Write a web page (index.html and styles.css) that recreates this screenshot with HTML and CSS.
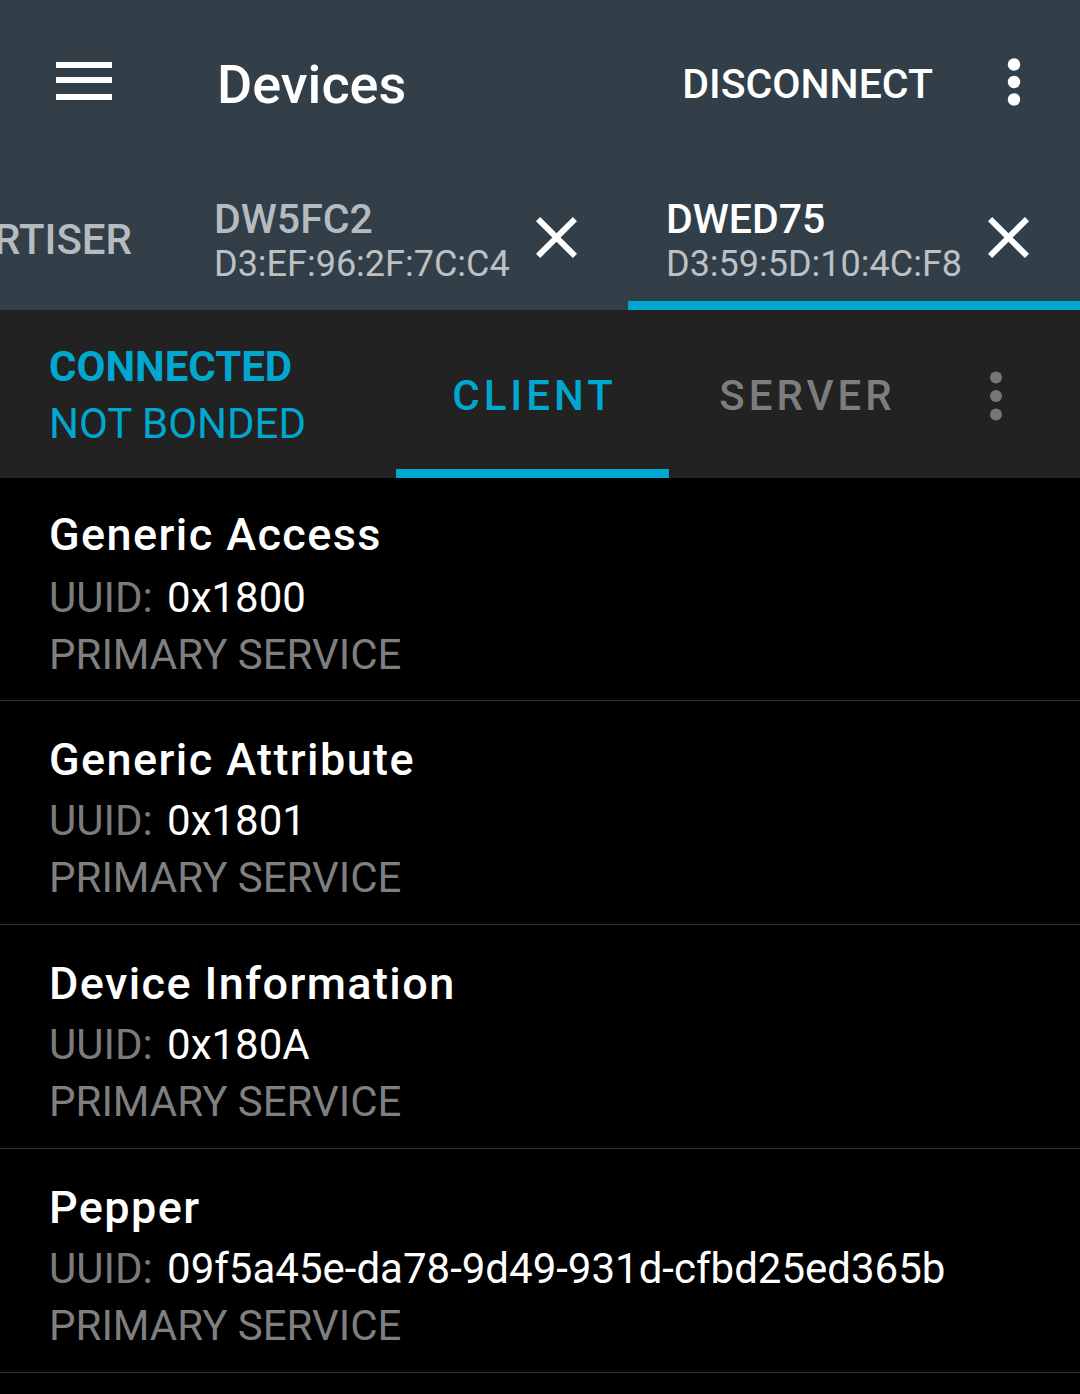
FILE: index.html
```html
<!DOCTYPE html>
<html>
<head>
<meta charset="utf-8">
<link rel="stylesheet" href="styles.css">
</head>
<body>
<div class="app">
  <header class="appbar">
    <div class="toolbar">
      <svg class="menu-icon" width="56" height="38" viewBox="0 0 56 38"><rect x="0" y="0" width="56" height="6" fill="#fff"/><rect x="0" y="15" width="56" height="6" fill="#fff"/><rect x="0" y="32" width="56" height="6" fill="#fff"/></svg>
      <div class="title">Devices</div>
      <div class="spacer"></div>
      <div class="action">DISCONNECT</div>
      <svg class="overflow" width="14" height="48" viewBox="0 0 14 48"><circle cx="7" cy="6.5" r="6.2" fill="#fff"/><circle cx="7" cy="24" r="6.2" fill="#fff"/><circle cx="7" cy="41.5" r="6.2" fill="#fff"/></svg>
    </div>
    <div class="device-tabs">
      <div class="dtab dtab-partial"><span class="dtab-single">ADVERTISER</span></div>
      <div class="dtab">
        <div class="dtab-text">
          <div class="dtab-name">DW5FC2</div>
          <div class="dtab-mac">D3:EF:96:2F:7C:C4</div>
        </div>
        <svg class="close" width="41" height="41" viewBox="5 5 14 14"><path fill="#fff" d="M19 6.41L17.59 5 12 10.59 6.41 5 5 6.41 10.59 12 5 17.59 6.41 19 12 13.41 17.59 19 19 17.59 13.41 12z"/></svg>
      </div>
      <div class="dtab dtab-active">
        <div class="dtab-text">
          <div class="dtab-name">DWED75</div>
          <div class="dtab-mac">D3:59:5D:10:4C:F8</div>
        </div>
        <svg class="close" width="41" height="41" viewBox="5 5 14 14"><path fill="#fff" d="M19 6.41L17.59 5 12 10.59 6.41 5 5 6.41 10.59 12 5 17.59 6.41 19 12 13.41 17.59 19 19 17.59 13.41 12z"/></svg>
      </div>
    </div>
  </header>
  <div class="statusbar">
    <div class="conn">
      <div class="conn-state">CONNECTED</div>
      <div class="conn-bond">NOT BONDED</div>
    </div>
    <div class="mtab mtab-active"><span>CLIENT</span></div>
    <div class="mtab"><span>SERVER</span></div>
    <svg class="overflow2" width="14" height="50" viewBox="0 0 14 50"><circle cx="7" cy="6.5" r="6" fill="#777"/><circle cx="7" cy="25" r="6" fill="#777"/><circle cx="7" cy="43.5" r="6" fill="#777"/></svg>
  </div>
  <main class="list">
    <div class="item">
      <div class="item-title">Generic Access</div>
      <div class="item-uuid"><span class="lbl">UUID:</span> <span class="val">0x1800</span></div>
      <div class="item-type">PRIMARY SERVICE</div>
    </div>
    <div class="item">
      <div class="item-title">Generic Attribute</div>
      <div class="item-uuid"><span class="lbl">UUID:</span> <span class="val">0x1801</span></div>
      <div class="item-type">PRIMARY SERVICE</div>
    </div>
    <div class="item">
      <div class="item-title">Device Information</div>
      <div class="item-uuid"><span class="lbl">UUID:</span> <span class="val">0x180A</span></div>
      <div class="item-type">PRIMARY SERVICE</div>
    </div>
    <div class="item">
      <div class="item-title">Pepper</div>
      <div class="item-uuid"><span class="lbl">UUID:</span> <span class="val">09f5a45e-da78-9d49-931d-cfbd25ed365b</span></div>
      <div class="item-type">PRIMARY SERVICE</div>
    </div>
  </main>
</div>
</body>
</html>
```
FILE: styles.css
```css
html, body {
  margin: 0;
  padding: 0;
  background: #000;
}
body {
  font-family: Roboto, "Liberation Sans", sans-serif;
  width: 1080px;
  height: 1394px;
  overflow: hidden;
}
.appbar {
  background: #323e48;
}
.toolbar {
  height: 168px;
  display: flex;
  align-items: center;
}
.menu-icon {
  align-self: flex-start;
  margin-top: 62px;
  margin-left: 56px;
  margin-right: 105px;
}
.title {
  color: #fff;
  font-size: 54px;
  font-weight: 500;
}
.spacer { flex: 1; }
.action {
  color: #fff;
  font-size: 41px;
  font-weight: 500;
}
.overflow {
  align-self: flex-start;
  margin-top: 58px;
  margin-left: 74px;
  margin-right: 59px;
}
.device-tabs {
  display: flex;
  height: 142px;
  overflow: hidden;
}
.dtab {
  box-sizing: border-box;
  flex: 0 0 452px;
  height: 142px;
  display: flex;
  align-items: center;
  padding-left: 38px;
  padding-right: 51px;
  border-bottom: 9px solid transparent;
}
.dtab-partial {
  flex: 0 0 176px;
  padding-left: 0;
  padding-right: 44px;
  justify-content: flex-end;
  overflow: hidden;
}
.dtab-single {
  white-space: nowrap;
  color: #b6bbbf;
  font-size: 42px;
  font-weight: 500;
  margin-top: 10px;
}
.dtab-active {
  border-bottom-color: #00a8cf;
}
.dtab-text {
  flex: 1;
  margin-top: 13px;
}
.dtab-name {
  font-size: 41px;
  font-weight: 500;
  line-height: 46px;
  color: #b6bbbf;
}
.dtab-mac {
  font-size: 36px;
  line-height: 45px;
  color: #bcc1c5;
}
.dtab-active .dtab-name {
  color: #fff;
}
.close {
  margin-top: 5px;
}
.statusbar {
  height: 168px;
  background: #222;
  display: flex;
  align-items: center;
}
.conn {
  box-sizing: border-box;
  flex: 0 0 396px;
  align-self: flex-start;
  padding-left: 49px;
  padding-top: 28px;
  color: #00a8cf;
  font-size: 42px;
  line-height: 57px;
}
.conn-state { font-weight: 700; }
.mtab {
  box-sizing: border-box;
  flex: 0 0 273px;
  height: 168px;
  display: flex;
  align-items: center;
  justify-content: center;
  border-bottom: 9px solid transparent;
  font-size: 42px;
  font-weight: 500;
  letter-spacing: 4px;
  color: #7d7d7d;
}
.mtab span {
  margin-top: 12px;
  margin-right: -4px;
}
.mtab-active {
  border-bottom-color: #00a8cf;
  color: #00a8cf;
}
.overflow2 {
  margin-left: 47px;
  margin-top: 4px;
}
.list {
  display: flex;
  flex-direction: column;
}
.item {
  box-sizing: border-box;
  height: 224px;
  padding: 29px 0 0 49px;
  border-bottom: 1px solid #333;
}
.item:first-child {
  height: 223px;
  padding-top: 27px;
}
.item-title {
  color: #fff;
  font-size: 45px;
  font-weight: 500;
  letter-spacing: 1.4px;
  line-height: 60px;
  margin-bottom: 2px;
}
.item:first-child .item-title {
  margin-bottom: 4px;
}
.item-uuid {
  color: #fff;
  font-size: 42px;
  line-height: 57px;
}
.lbl { color: #7b7b7b; }
.val { margin-left: 4px; }
.item-type {
  color: #7f7f7f;
  font-size: 42px;
  line-height: 57px;
}
```
